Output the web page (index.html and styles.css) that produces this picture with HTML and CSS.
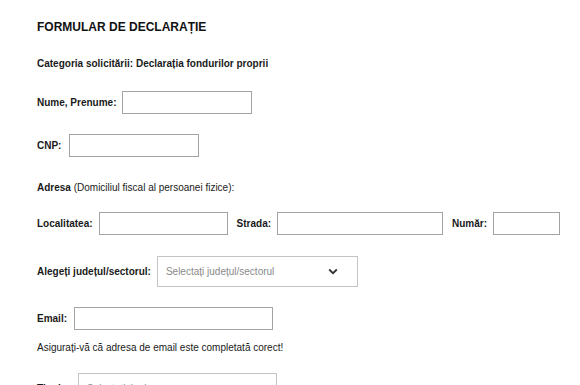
FILE: index.html
```html
<!DOCTYPE html>
<html lang="ro">
<head>
<meta charset="utf-8">
<title>Formular de declarație</title>
<link rel="stylesheet" href="styles.css">
</head>
<body>
<div class="form">
  <h1 class="title">FORMULAR DE DECLARAȚIE</h1>
  <p class="line category"><b>Categoria solicitării: Declarația fondurilor proprii</b></p>
  <div class="row r-name">
    <label class="lbl">Nume, Prenume:</label>
    <span class="field w-name"></span>
  </div>
  <div class="row r-cnp">
    <label class="lbl lbl-cnp">CNP:</label>
    <span class="field w-cnp"></span>
  </div>
  <p class="line address"><b>Adresa</b> (Domiciliul fiscal al persoanei fizice):</p>
  <div class="row r-loc">
    <label class="lbl">Localitatea:</label>
    <span class="field w-loc"></span>
    <label class="lbl">Strada:</label>
    <span class="field w-str"></span>
    <label class="lbl">Număr:</label>
    <span class="field w-nr"></span>
  </div>
  <div class="row r-sel">
    <label class="lbl">Alegeți județul/sectorul:</label>
    <span class="select w-sel">
      <span class="ph">Selectați județul/sectorul</span>
      <svg class="chev" width="10" height="7" viewBox="0 0 10 7"><path d="M1.2 1.5 L5 5.2 L8.8 1.5" fill="none" stroke="#333" stroke-width="1.8"/></svg>
    </span>
  </div>
  <div class="row r-email">
    <label class="lbl lbl-email">Email:</label>
    <span class="field w-email"></span>
  </div>
  <p class="line note">Asigurați-vă că adresa de email este completată corect!</p>
  <div class="row r-last">
    <label class="lbl lbl-last">Tipul:</label>
    <span class="select w-last">
      <span class="ph">Selectați tipul</span>
      <svg class="chev" width="10" height="7" viewBox="0 0 10 7"><path d="M1.2 1.5 L5 5.2 L8.8 1.5" fill="none" stroke="#333" stroke-width="1.8"/></svg>
    </span>
  </div>
</div>
</body>
</html>
```
FILE: styles.css
```css
html, body {
  margin: 0;
  padding: 0;
  background: #fff;
}
body {
  width: 580px;
  height: 385px;
  overflow: hidden;
  font-family: "Liberation Sans", Arial, sans-serif;
  color: #1a1a1a;
  font-size: 10px;
}
.form {
  display: flex;
  flex-direction: column;
  align-items: flex-start;
  padding-left: 37px;
}
.title {
  margin: 20px 0 0;
  font-size: 12px;
  line-height: 14px;
  font-weight: bold;
  color: #111;
}
.line {
  margin: 0;
  line-height: 12px;
  height: 12px;
  white-space: nowrap;
}
.category { margin-top: 24px; }
.address { margin-top: 25px; }
.note { margin-top: 12px; }
.row {
  display: flex;
  align-items: center;
}
.r-name { margin-top: 21px; }
.r-cnp { margin-top: 20px; }
.r-loc { margin-top: 18px; }
.r-sel { margin-top: 21px; }
.r-email { margin-top: 20px; }
.r-last { margin-top: 19px; }
.lbl {
  font-weight: bold;
  margin-right: 6px;
  white-space: nowrap;
}
.lbl-cnp { margin-right: 8px; }
.lbl-email { margin-right: 7px; }
.lbl-last { margin-right: 14px; }
.field {
  display: block;
  box-sizing: border-box;
  height: 23px;
  border: 1px solid #a3a3a3;
  background: #fff;
  margin-right: 9px;
}
.w-name { width: 130px; }
.w-cnp { width: 130px; }
.w-loc { width: 129px; }
.w-str { width: 166px; }
.w-nr { width: 67px; }
.w-email { width: 199px; }
.select {
  display: flex;
  align-items: center;
  justify-content: space-between;
  box-sizing: border-box;
  height: 31px;
  border: 1px solid #c4c4c4;
  padding: 0 19px 0 8px;
  background: #fff;
}
.w-sel { width: 201px; }
.w-last { width: 199px; }
.ph {
  color: #8a8a8a;
  font-size: 10px;
  white-space: nowrap;
}
.chev { display: block; }
```
